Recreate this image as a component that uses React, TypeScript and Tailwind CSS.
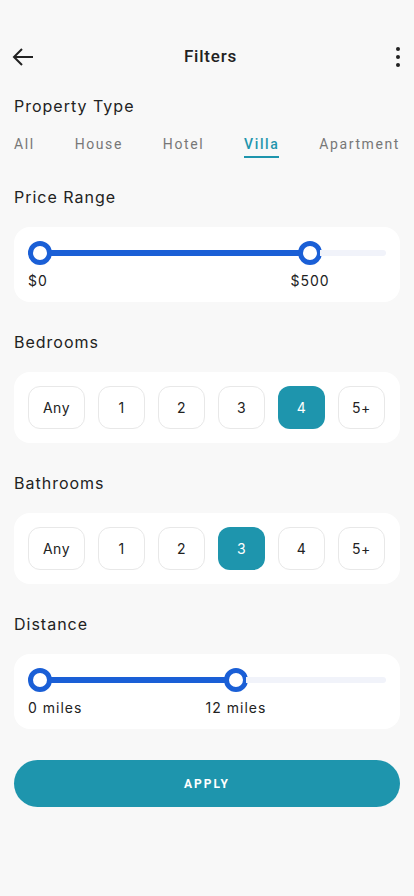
import React from "react";

const tabs = ["All", "House", "Hotel", "Villa", "Apartment"];
const options = ["Any", "1", "2", "3", "4", "5+"];

const Thumb = ({ label, center }: { label: string; center?: boolean }) => (
  <div className={"w-[24px] flex flex-col shrink-0 " + (center ? "items-center" : "items-start")}>
    <div className="w-[24px] h-[24px] rounded-full border-[5px] border-[#1a5fd6] bg-white" />
    <span className="mt-[6px] leading-[20px] whitespace-nowrap text-[14px] tracking-[1px] text-[#222]">
      {label}
    </span>
  </div>
);

const RangeSlider = ({ fill, from, to }: { fill: number; from: string; to: string }) => (
  <div className="bg-white rounded-2xl px-[14px] pt-[14px] pb-[11px] flex items-start">
    <Thumb label={from} />
    <div className="mt-[9px] h-[6px] -mx-[2px] bg-[#1a5fd6]" style={{ width: fill }} />
    <Thumb label={to} center />
    <div className="mt-[9px] h-[6px] -ml-[2px] flex-1 rounded-r-full bg-[#f1f3fa]" />
  </div>
);

const Options = ({ selected }: { selected: string }) => (
  <div className="bg-white rounded-2xl p-[14px] flex gap-[13px]">
    {options.map((o) => (
      <div
        key={o}
        className={
          "h-[43px] rounded-[12px] flex items-center justify-center text-[14px] tracking-[0.5px] " +
          (o === "Any" ? "w-[57px] " : "w-[47px] ") +
          (o === selected ? "bg-[#1e95ad] text-white" : "border border-[#e8e8e8] text-[#222]")
        }
      >
        {o}
      </div>
    ))}
  </div>
);

const Heading = ({ children, className }: { children: React.ReactNode; className: string }) => (
  <div className={"text-[16px] tracking-[1px] leading-[20px] text-[#222] " + className}>{children}</div>
);

export default function App() {
  return (
    <div
      className="w-[414px] h-[896px] bg-[#f8f8f8] text-[#222] px-[14px] pt-[45px]"
      style={{ fontFamily: "Inter, 'Noto Sans', sans-serif" }}
    >
      <div className="relative flex items-center justify-between h-[24px] -ml-[3px] -mr-[10px]">
        <svg width="24" height="24" viewBox="0 0 24 24" fill="none" stroke="#222" strokeWidth="2">
          <path d="M22 12H3M11 4l-8 8 8 8" />
        </svg>
        <span
          className="absolute left-0 right-0 text-center text-[17px] font-medium tracking-[0.8px]"
          style={{ fontFamily: "Roboto, sans-serif" }}
        >
          Filters
        </span>
        <svg width="24" height="24" viewBox="0 0 24 24" fill="#222">
          <circle cx="12" cy="4" r="2" />
          <circle cx="12" cy="12" r="2" />
          <circle cx="12" cy="20" r="2" />
        </svg>
      </div>

      <Heading className="mt-[27px]">Property Type</Heading>
      <div
        className="flex justify-between mt-[18px] text-[14px] tracking-[1.6px] text-[#777]"
        style={{ fontFamily: "Roboto, sans-serif" }}
      >
        {tabs.map((t) => (
          <span
            key={t}
            className={
              "leading-[20px] pb-[2px] border-b-2 " +
              (t === "Villa" ? "text-[#1e95ad] font-medium border-[#1e95ad]" : "border-transparent")
            }
          >
            {t}
          </span>
        ))}
      </div>

      <Heading className="mt-[29px]">Price Range</Heading>
      <div className="mt-[20px]">
        <RangeSlider fill={250} from="$0" to="$500" />
      </div>

      <Heading className="mt-[30px]">Bedrooms</Heading>
      <div className="mt-[20px]">
        <Options selected="4" />
      </div>

      <Heading className="mt-[30px]">Bathrooms</Heading>
      <div className="mt-[20px]">
        <Options selected="3" />
      </div>

      <Heading className="mt-[30px]">Distance</Heading>
      <div className="mt-[20px]">
        <RangeSlider fill={176} from="0 miles" to="12 miles" />
      </div>

      <button
        className="mt-[31px] w-full h-[47px] rounded-full bg-[#1e95ad] text-white text-[12px] font-bold tracking-[2px]"
        style={{ fontFamily: "Roboto, sans-serif" }}
      >
        APPLY
      </button>
    </div>
  );
}
